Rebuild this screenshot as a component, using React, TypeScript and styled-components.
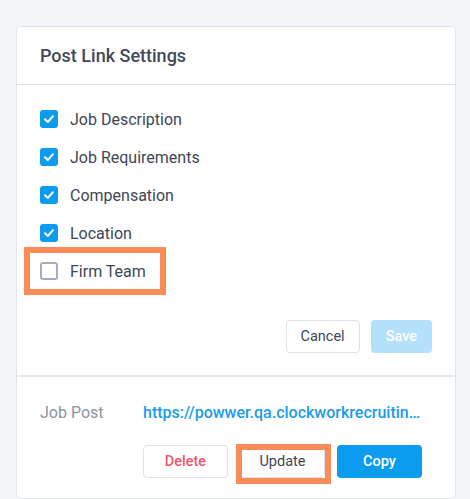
import styled, { createGlobalStyle } from "styled-components";

const GlobalStyle = createGlobalStyle`
    body {
        margin: 0;
        background: #f3f6f9;
        font-family: Roboto, "Liberation Sans", sans-serif;
    }
`;

const PageDiv = styled.div`
    padding: 26px 14px 0 16px;
`;

const CardDiv = styled.div`
    background: #ffffff;
    border: 1px solid #dfe3e8;
    border-radius: 5px;
    width: 438px;
`;

const HeaderDiv = styled.div`
    height: 57px;
    display: flex;
    align-items: center;
    padding-left: 23px;
    border-bottom: 1px solid #dfe3e8;
`;

const TitleH = styled.h2`
    margin: 0;
    font-size: 18px;
    font-weight: 500;
    color: #3f4958;
`;

const SettingsDiv = styled.div`
    padding: 15px 23px 22px 23px;
    border-bottom: 2px solid #e3e7ec;
`;

const OptionList = styled.div`
    display: flex;
    flex-direction: column;
    align-items: flex-start;
`;

const OptionRow = styled.label<{ $highlight?: boolean }>`
    display: flex;
    align-items: center;
    gap: 12px;
    height: 38px;
    font-size: 16px;
    color: #3d4756;
    cursor: pointer;
    ${(p) =>
        p.$highlight &&
        `
        margin-left: -11px;
        padding: 0 15px 0 11px;
        outline: 6px solid #f98d55;
        outline-offset: -1px;
    `}
`;

const CheckBox = styled.span<{ $checked: boolean }>`
    width: 18px;
    height: 18px;
    box-sizing: border-box;
    border-radius: 3px;
    display: flex;
    align-items: center;
    justify-content: center;
    background: ${(p) => (p.$checked ? "#0b9cf0" : "#ffffff")};
    border: ${(p) => (p.$checked ? "none" : "2px solid #a3adb9")};
`;

const ActionsDiv = styled.div`
    display: flex;
    justify-content: flex-end;
    gap: 11px;
    margin-top: 30px;
`;

const Button = styled.button<{ $variant: "default" | "primary" | "disabled" | "danger" }>`
    height: 33px;
    padding: 0 14px;
    border-radius: 4px;
    font-family: Roboto, "Liberation Sans", sans-serif;
    font-size: 14.5px;
    font-weight: ${(p) => (p.$variant === "default" ? 400 : 500)};
    position: relative;
    border: 1px solid
        ${(p) => (p.$variant === "default" || p.$variant === "danger" ? "#dde2e8" : "transparent")};
    background: ${(p) =>
        p.$variant === "primary" ? "#0b9cf0" : p.$variant === "disabled" ? "#b3e0fb" : "#ffffff"};
    color: ${(p) =>
        p.$variant === "primary" || p.$variant === "disabled"
            ? "#ffffff"
            : p.$variant === "danger"
            ? "#f0566f"
            : "#3d4756"};
`;

const HighlightButton = styled(Button)`
    &::after {
        content: "";
        position: absolute;
        top: -2px;
        left: -5px;
        right: -7px;
        bottom: -7px;
        border: 6px solid #f98d55;
        pointer-events: none;
    }
`;

const PostDiv = styled.div`
    padding: 24px 33px 20px 23px;
`;

const PostRow = styled.div`
    display: flex;
    align-items: center;
    height: 22px;
`;

const PostLabel = styled.span`
    width: 103px;
    font-size: 16px;
    color: #8a94a1;
`;

const PostLink = styled.a`
    flex: 1;
    min-width: 0;
    font-size: 16px;
    font-weight: 500;
    color: #1b9cec;
    text-decoration: none;
    white-space: nowrap;
    overflow: hidden;
    text-overflow: ellipsis;
`;

const PostActions = styled.div`
    margin: 22px 0 0 103px;
    display: grid;
    grid-template-columns: repeat(3, 1fr);
    gap: 12px;
`;

function Check({ checked }: { checked: boolean }) {
    return (
        <CheckBox $checked={checked}>
            {checked && (
                <svg width="12" height="12" viewBox="0 0 12 12">
                    <path d="M2 6.3 L4.8 9 L10 3.2" fill="none" stroke="#fff" strokeWidth="2" strokeLinecap="round" strokeLinejoin="round" />
                </svg>
            )}
        </CheckBox>
    );
}

const options = [
    { label: "Job Description", checked: true },
    { label: "Job Requirements", checked: true },
    { label: "Compensation", checked: true },
    { label: "Location", checked: true },
    { label: "Firm Team", checked: false, highlight: true },
];

export default function App() {
    return (
        <PageDiv>
            <GlobalStyle />
            <CardDiv>
                <HeaderDiv>
                    <TitleH>Post Link Settings</TitleH>
                </HeaderDiv>
                <SettingsDiv>
                    <OptionList>
                        {options.map((o) => (
                            <OptionRow key={o.label} $highlight={o.highlight}>
                                <Check checked={o.checked} />
                                {o.label}
                            </OptionRow>
                        ))}
                    </OptionList>
                    <ActionsDiv>
                        <Button $variant="default">Cancel</Button>
                        <Button $variant="disabled">Save</Button>
                    </ActionsDiv>
                </SettingsDiv>
                <PostDiv>
                    <PostRow>
                        <PostLabel>Job Post</PostLabel>
                        <PostLink href="#">https://powwer.qa.clockworkrecruiting.com/job-posts/senior-developer</PostLink>
                    </PostRow>
                    <PostActions>
                        <Button $variant="danger">Delete</Button>
                        <HighlightButton $variant="default">Update</HighlightButton>
                        <Button $variant="primary">Copy</Button>
                    </PostActions>
                </PostDiv>
            </CardDiv>
        </PageDiv>
    );
}
